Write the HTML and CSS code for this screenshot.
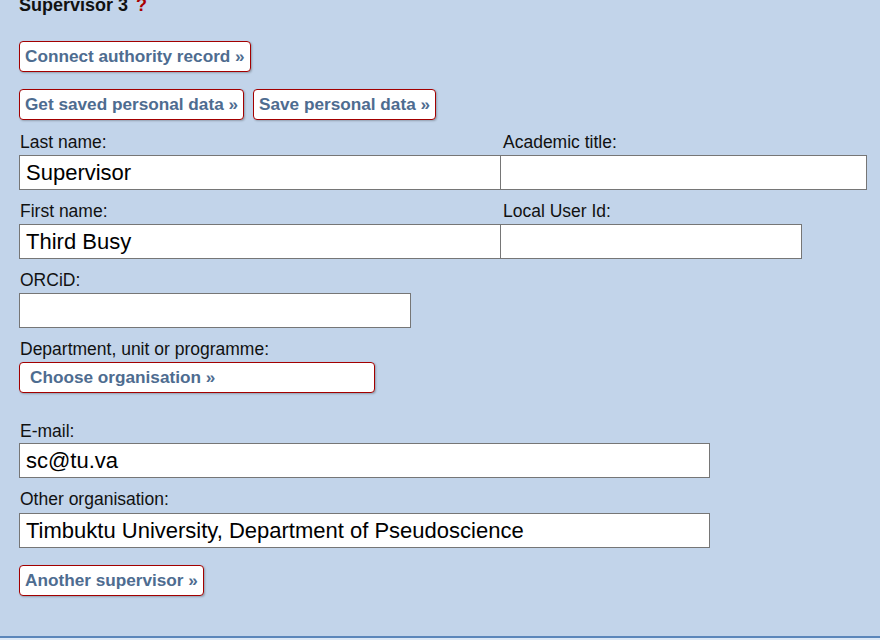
FILE: index.html
```html
<!DOCTYPE html>
<html>
<head>
<meta charset="utf-8">
<link rel="stylesheet" href="styles.css">
</head>
<body>
<div class="section">
  <div class="heading">Supervisor 3 <span class="help">?</span></div>
  <div class="btnrow first"><button class="btn">Connect authority record »</button></div>
  <div class="btnrow second">
    <button class="btn">Get saved personal data »</button>
    <button class="btn">Save personal data »</button>
  </div>
  <div class="row">
    <div class="field w-main"><label>Last name:</label><input class="inp" type="text" value="Supervisor"></div>
    <div class="field w-title"><label>Academic title:</label><input class="inp joined" type="text" value=""></div>
  </div>
  <div class="row">
    <div class="field w-main"><label>First name:</label><input class="inp" type="text" value="Third Busy"></div>
    <div class="field w-local"><label>Local User Id:</label><input class="inp joined" type="text" value=""></div>
  </div>
  <div class="row">
    <div class="field w-orcid"><label>ORCiD:</label><input class="inp" type="text" value=""></div>
  </div>
  <div class="row dept">
    <div class="field"><label>Department, unit or programme:</label><button class="btn wide">Choose organisation »</button></div>
  </div>
  <div class="row email">
    <div class="field w-long"><label>E-mail:</label><input class="inp" type="text" value="sc@tu.va"></div>
  </div>
  <div class="row other">
    <div class="field w-long"><label>Other organisation:</label><input class="inp" type="text" value="Timbuktu University, Department of Pseudoscience"></div>
  </div>
  <div class="btnrow last"><button class="btn">Another supervisor »</button></div>
</div>
<div class="below"></div>
</body>
</html>
```
FILE: styles.css
```css
html, body {
  margin: 0;
  padding: 0;
  background: #dce8f6;
}
body {
  font-family: "Liberation Sans", Arial, sans-serif;
  font-size: 17.5px;
  color: #111;
  overflow: hidden;
  height: 640px;
}
.section {
  display: flow-root;
  background: #c2d4ea;
  height: 638px;
  border-bottom: 2px solid #5b86ba;
  box-sizing: border-box;
  padding: 0 0 0 19px;
}
.heading {
  font-weight: bold;
  font-size: 18px;
  line-height: 20px;
  margin-top: -5px;
  height: 20px;
}
.help {
  color: #aa0000;
  margin-left: 3px;
}
.btnrow {
  display: flex;
  gap: 9px;
}
.btnrow.first { margin-top: 26px; }
.btnrow.second { margin-top: 17px; }
.btnrow.last { margin-top: 17px; }
.btn {
  font-family: "Liberation Sans", Arial, sans-serif;
  font-weight: bold;
  font-size: 17.2px;
  color: #4e6c90;
  background: #fff;
  border: 1px solid #a30000;
  border-radius: 4px;
  box-shadow: 1px 1px 2px rgba(0,0,0,0.25);
  height: 31px;
  padding: 0 5px 0 5px;
  margin: 0;
  text-align: left;
  cursor: pointer;
}
.btn.wide {
  width: 356px;
  padding-left: 10px;
}
.row {
  display: flex;
  margin-top: 11px;
}
.btnrow.second + .row { margin-top: 12px; }
.field {
  display: flex;
  flex-direction: column;
}
.field label {
  display: block;
  line-height: 20px;
  height: 20px;
  padding-left: 1px;
  margin-bottom: 3px;
}
.inp {
  box-sizing: border-box;
  height: 35px;
  border: 1px solid #767676;
  background: #fff;
  font-family: "Liberation Sans", Arial, sans-serif;
  font-size: 22px;
  color: #000;
  padding: 0 6px;
  margin: 0;
  width: 100%;
}
.w-main { width: 482px; }
.w-title { width: 367px; }
.w-local { width: 302px; }
.w-orcid { width: 392px; }
.w-long { width: 691px; }
.field.w-title label, .field.w-local label { padding-left: 2px; }
.inp.joined { margin-left: -1px; }
.row.email { margin-top: 28px; }
.row.email .field label { margin-bottom: 2px; }
.row.other .field label { margin-bottom: 4px; }
.row.other { margin-top: 11px; }
.below {
  height: 10px;
  background: #dce8f6;
}
```
